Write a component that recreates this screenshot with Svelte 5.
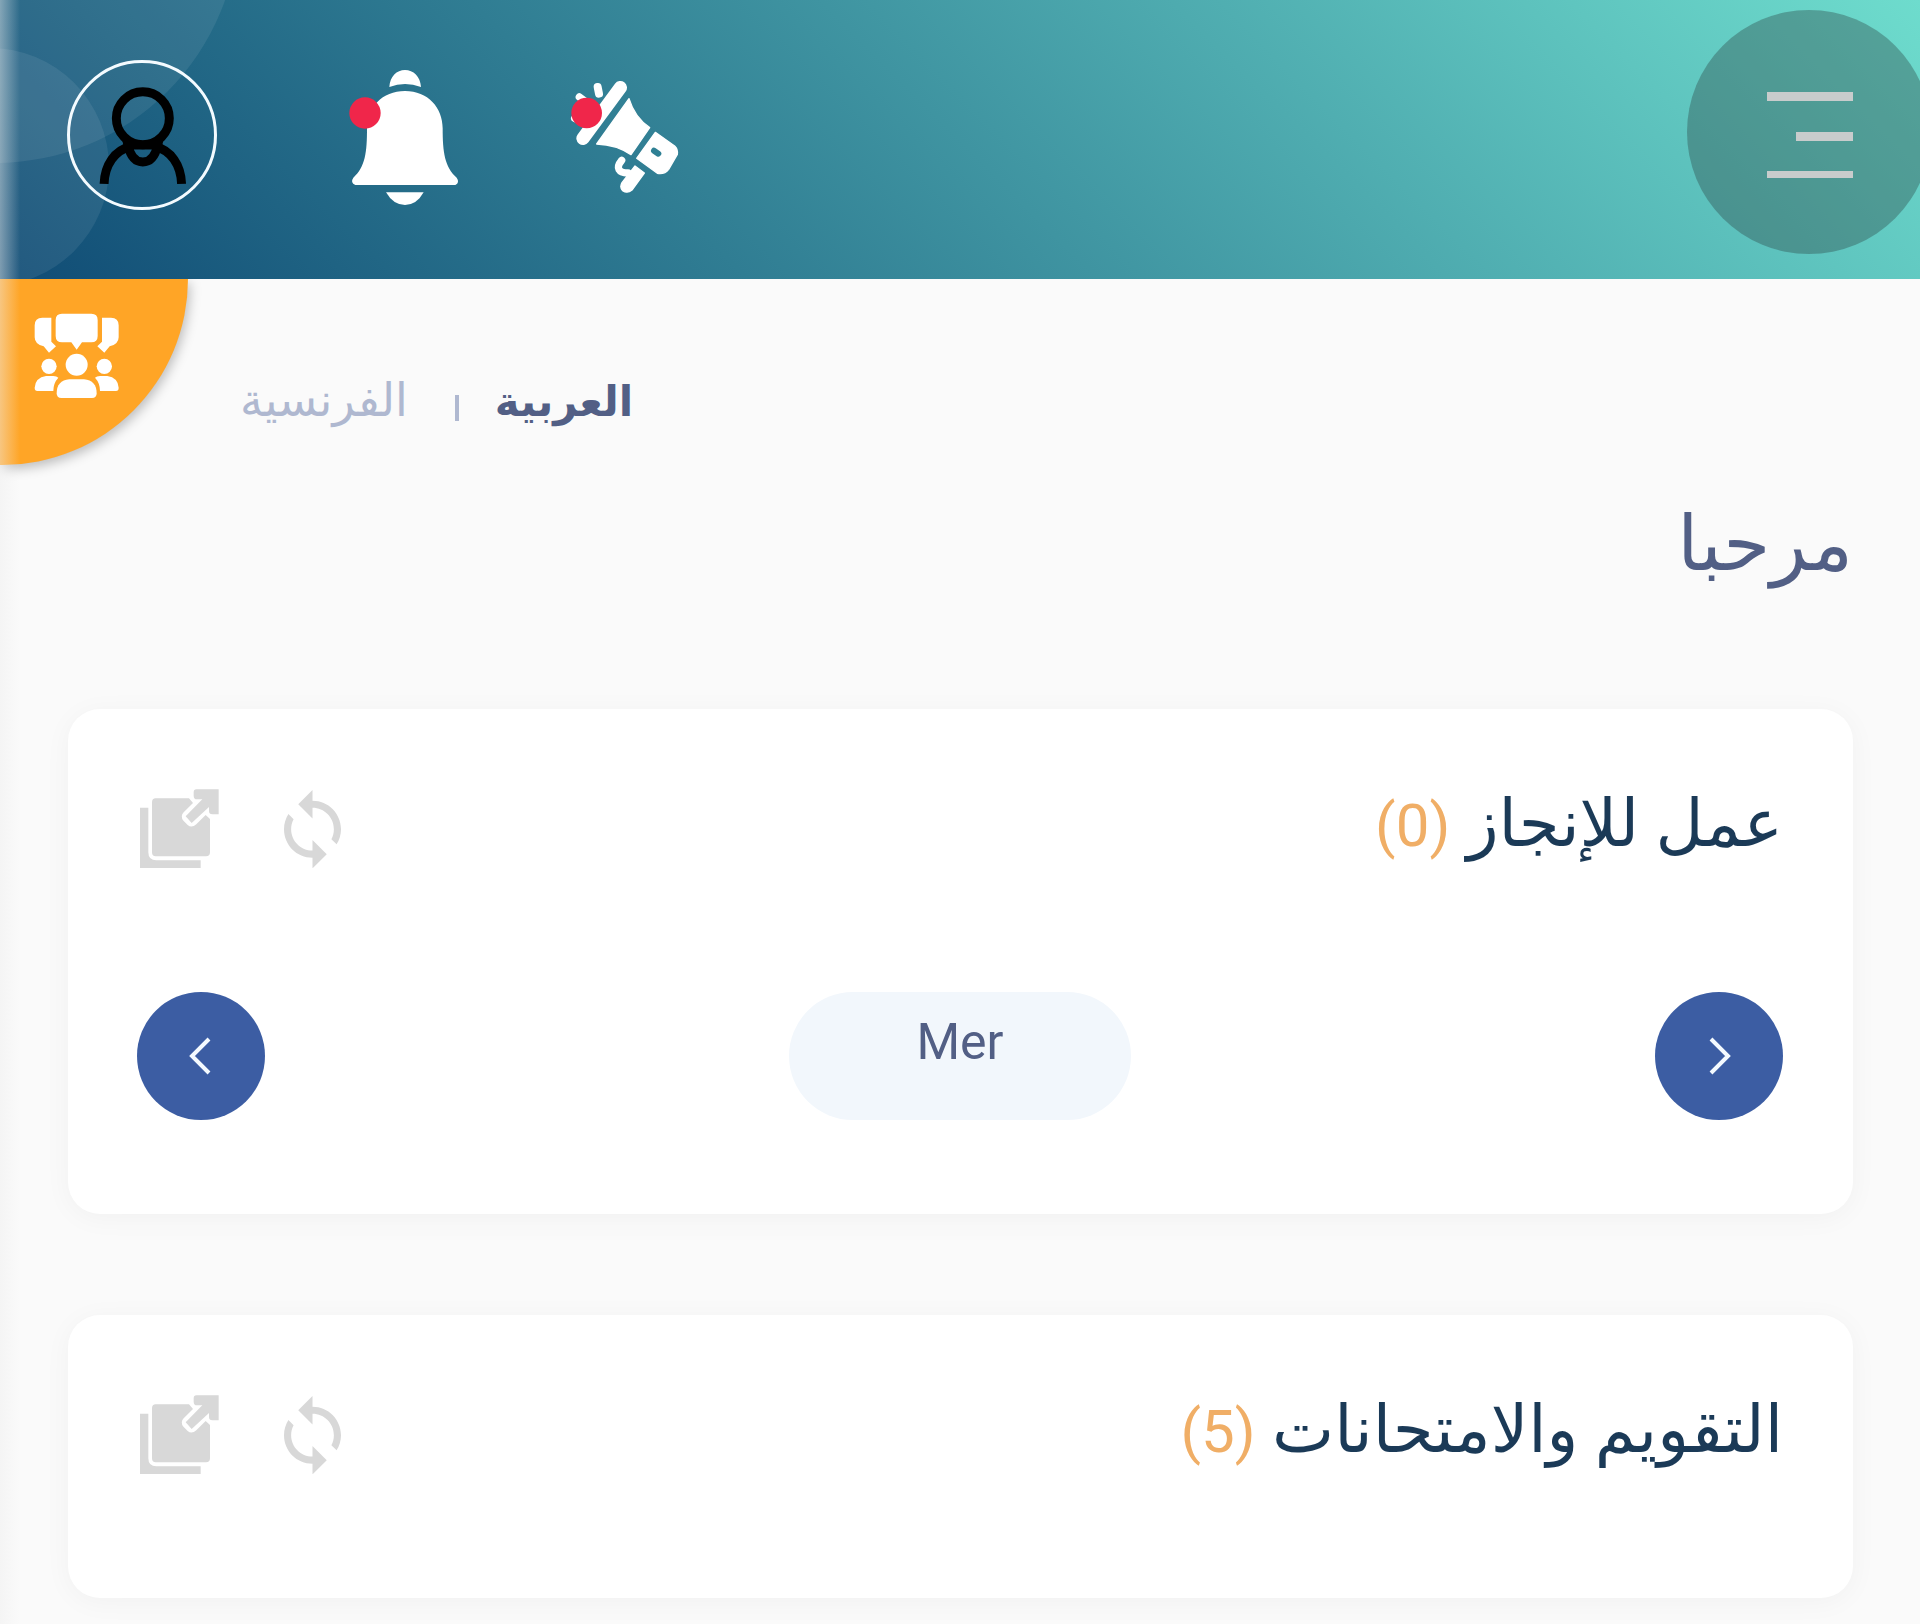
<script>
  const cards = [
    { id: 'work', title: 'عمل للإنجاز', count: 0, day: 'Mer' },
    { id: 'exams', title: 'التقويم والامتحانات', count: 5, day: null }
  ];
</script>

<div class="page">
  <header class="topbar">
    <svg class="bubbles" viewBox="0 0 240 279" aria-hidden="true">
      <circle cx="-5" cy="-81" r="244" />
      <circle cx="-10" cy="167" r="119" />
    </svg>
    <button class="avatar" aria-label="الحساب">
      <svg viewBox="200 179 453 453" aria-hidden="true">
        <g fill="none" stroke="#000" stroke-width="27">
          <circle cx="429" cy="355" r="80" />
          <path d="M312 553C314 496 344 452 392 440M546 553C544 496 514 452 466 440" />
          <path d="M384 436C392 472 408 487 429 487S466 472 474 436Z" />
        </g>
      </svg>
    </button>
    <button class="bell" aria-label="الإشعارات">
      <svg viewBox="1035 206 360 408" aria-hidden="true">
        <g fill="#fff">
          <path d="M1168 260C1170 228 1190 209 1215 209S1261 228 1263 260Q1215 242 1168 260Z" />
          <path d="M1215 272C1284 272 1328 322 1328 384C1328 456 1334 500 1370 532Q1380 546 1366 554H1066Q1050 546 1060 532C1096 500 1101 456 1101 384C1101 322 1146 272 1215 272Z" />
          <path d="M1158 576H1271Q1250 614 1215 614T1158 576Z" />
        </g>
        <circle cx="1095" cy="338" r="47" fill="#f0264a" />
      </svg>
    </button>
    <button class="horn" aria-label="الإعلانات">
      <svg viewBox="90 90 336 342" aria-hidden="true">
        <g fill="#fff" stroke="#fff" stroke-linejoin="round" stroke-linecap="round">
          <path d="M241 113L129 265" stroke-width="40" fill="none" />
          <path d="M173 111L177 131" stroke-width="24" fill="none" />
          <path d="M118 141L150 165M104 205L120 212" stroke-width="22" fill="none" />
          <path d="M267 146Q284 202 329 233L273 314Q230 284 170 282Z" stroke-width="4" />
          <path d="M346 247L404 288Q414 296 412 313L386 358Q374 374 352 370L290 325Z" stroke-width="4" />
          <path d="M245 331C226 354 236 368 264 369" stroke-width="22" fill="none" />
          <path d="M285 348L313 369L276 420Q262 432 248 422Q238 412 246 398Z" stroke-width="4" />
        </g>
        <path d="M342 302L355 311" stroke="#2f8094" stroke-width="18" stroke-linecap="round" />
        <circle cx="140" cy="189" r="46" fill="#f0264a" />
      </svg>
    </button>
    <button class="menu" aria-label="القائمة">
      <span></span><span class="short"></span><span class="thin"></span>
    </button>
  </header>

  <button class="community" aria-label="المجتمع">
    <svg viewBox="102 128 255 257" aria-hidden="true">
      <g fill="#fff">
        <path d="M186 130H274Q293 130 293 149V197Q293 216 274 216H246L230 238L214 216H186Q167 216 167 197V149Q167 130 186 130Z" />
        <path d="M127 142H154V214L168 228L147 247L131 228Q104 222 104 201V165Q104 142 127 142Z" />
        <path d="M333 142H306V214L292 228L313 247L329 228Q356 222 356 201V165Q356 142 333 142Z" />
        <circle cx="230" cy="283" r="33" />
        <circle cx="147" cy="288" r="23" />
        <circle cx="313" cy="288" r="23" />
        <path d="M208 327H252Q290 331 290 369Q290 383 276 383H184Q170 383 170 369Q170 331 208 327Z" />
        <path d="M138 317H160Q170 317 175 322Q160 338 160 362H112Q104 362 104 352Q106 322 138 317Z" />
        <path d="M322 317H300Q290 317 285 322Q300 338 300 362H348Q356 362 356 352Q354 322 322 317Z" />
      </g>
    </svg>
  </button>

  <nav class="languages" aria-label="اللغة">
    <a class="current" href="#ar">العربية</a>
    <span class="divider"></span>
    <a href="#fr">الفرنسية</a>
  </nav>

  <main>
    <h1>مرحبا</h1>
    {#each cards as card (card.id)}
      <section class="card">
        <div class="head">
          <h2>{card.title} <span class="count">({card.count})</span></h2>
          <div class="tools">
            <button aria-label="تحديث">
              <svg class="sync" viewBox="4 1 16 22" aria-hidden="true">
                <path d="M12 4V1L8 5l4 4V6c3.31 0 6 2.69 6 6 0 1.01-.25 1.97-.7 2.8l1.46 1.46C19.54 15.03 20 13.57 20 12c0-4.42-3.58-8-8-8zm0 14c-3.31 0-6-2.69-6-6 0-1.01.25-1.97.7-2.8L5.24 7.74C4.46 8.97 4 10.43 4 12c0 4.42 3.58 8 8 8v3l4-4-4-4v3z" />
              </svg>
            </button>
            <button aria-label="فتح">
              <svg class="open" viewBox="52 50 252 252" aria-hidden="true">
                <path d="M61 112H86V246Q86 270 110 270H243V293H61Z" />
                <path d="M108 84H208L220 98L192 126Q180 138 192 152L204 164Q216 174 230 162L258 134L271 146V246Q271 258 259 258H108Q97 258 97 246V96Q97 84 108 84Z" />
                <path d="M230 57H297V132H278Q268 132 268 122V110L216 158L198 138L248 87H232Q222 87 222 76V66Q222 57 230 57Z" />
              </svg>
            </button>
          </div>
        </div>
        {#if card.day}
          <div class="days">
            <button class="step" aria-label="السابق">
              <svg viewBox="0 0 128 128" aria-hidden="true"><path d="M56 47L73 64L56 81" /></svg>
            </button>
            <div class="day">{card.day}</div>
            <button class="step" aria-label="التالي">
              <svg viewBox="0 0 128 128" aria-hidden="true"><path d="M72 47L55 64L72 81" /></svg>
            </button>
          </div>
        {/if}
      </section>
    {/each}
  </main>
</div>

<style>
  :global(body) {
    margin: 0;
    background: #fafafa;
  }

  .page {
    position: relative;
    direction: rtl;
    overflow: hidden;
    min-height: 100vh;
    background: #fafafa;
    font-family: Roboto, 'DejaVu Sans', sans-serif;
    color: #525f85;
  }

  .page::after {
    content: '';
    position: absolute;
    inset: 0 auto 0 0;
    width: 20px;
    background: linear-gradient(to right, rgba(238, 238, 238, 0.45), rgba(238, 238, 238, 0));
    pointer-events: none;
  }

  button {
    display: block;
    flex: none;
    padding: 0;
    border: 0;
    background: none;
    cursor: pointer;
  }

  svg {
    display: block;
  }

  .topbar {
    position: relative;
    direction: ltr;
    display: flex;
    align-items: center;
    gap: 105px;
    box-sizing: border-box;
    height: 279px;
    padding: 0 67px 5px;
    overflow: hidden;
    background: linear-gradient(45deg, #104c75, #6edccd);
  }

  .bubbles {
    position: absolute;
    top: 0;
    left: 0;
    width: 240px;
    fill: rgba(255, 255, 255, 0.08);
  }

  .avatar {
    position: relative;
    box-sizing: border-box;
    width: 150px;
    height: 150px;
    margin: 0 23px 4px 0;
    border: 3px solid #f4fbff;
    border-radius: 50%;
  }

  .avatar svg {
    width: 150px;
    margin: -3px;
  }

  .bell svg {
    width: 120px;
  }

  .horn svg {
    width: 112px;
  }

  .menu {
    position: relative;
    display: flex;
    flex-direction: column;
    align-items: flex-end;
    justify-content: space-between;
    width: 86px;
    height: 86px;
    margin: 0 0 4px auto;
  }

  .menu::before {
    content: '';
    position: absolute;
    top: -82px;
    left: -80px;
    width: 244px;
    height: 244px;
    border-radius: 50%;
    background: rgba(40, 60, 60, 0.35);
  }

  .menu span {
    position: relative;
    width: 86px;
    height: 9px;
    background: #c8cccc;
  }

  .menu .short {
    width: 57px;
  }

  .menu .thin {
    height: 7px;
  }

  .community {
    position: absolute;
    top: 279px;
    left: 0;
    width: 188px;
    height: 186px;
    padding: 34px 69px 66px 34px;
    border-radius: 0 0 186px 0;
    background: #ffa526;
    box-shadow: 2px 4px 12px rgba(0, 0, 0, 0.25);
    clip-path: inset(0 -30px -30px 0);
  }

  .community svg {
    width: 85px;
  }

  .languages {
    display: flex;
    justify-content: flex-end;
    align-items: baseline;
    height: 72px;
    padding: 84px 0 0 240px;
    font-size: 46px;
    line-height: 74px;
  }

  .languages a {
    color: #afb8d0;
    text-decoration: none;
  }

  .languages .current {
    color: #525f85;
    font-size: 42px;
    font-weight: 700;
  }

  .divider {
    align-self: center;
    width: 4px;
    height: 26px;
    margin: 18px 36px 0 47px;
    background: #afb8d0;
  }

  main {
    padding: 0 67px 26px 68px;
  }

  h1 {
    margin: 0;
    padding: 61px 0 117px;
    font-size: 76px;
    font-weight: 400;
    line-height: 96px;
  }

  .card {
    display: flow-root;
    padding: 78px 70px 0 69px;
    border-radius: 32px;
    background: #fff;
    box-shadow: 0 4px 28px rgba(0, 0, 0, 0.04);
  }

  .card + .card {
    margin-top: 101px;
  }

  .head {
    display: flex;
    justify-content: space-between;
    align-items: center;
    height: 84px;
    margin-bottom: 121px;
  }

  h2 {
    margin: 0;
    color: #1b3a57;
    font-size: 66px;
    font-weight: 400;
    line-height: 76px;
    padding-bottom: 8px;
  }

  .count {
    color: #f0ae66;
    font-size: 60px;
  }

  .tools {
    display: flex;
    align-items: center;
    gap: 63px;
    fill: #d8d8d8;
  }

  .sync {
    width: 57px;
  }

  .open {
    width: 84px;
  }

  .days {
    display: flex;
    justify-content: space-between;
    margin-bottom: 94px;
  }

  .step {
    width: 128px;
    height: 128px;
    border-radius: 50%;
    background: #3c5da3;
  }

  .step path {
    fill: none;
    stroke: #f4faff;
    stroke-width: 4;
  }

  .day {
    box-sizing: border-box;
    width: 342px;
    height: 128px;
    padding-top: 18px;
    border-radius: 64px;
    background: #f2f7fc;
    font-size: 50px;
    line-height: 64px;
    text-align: center;
  }
</style>
